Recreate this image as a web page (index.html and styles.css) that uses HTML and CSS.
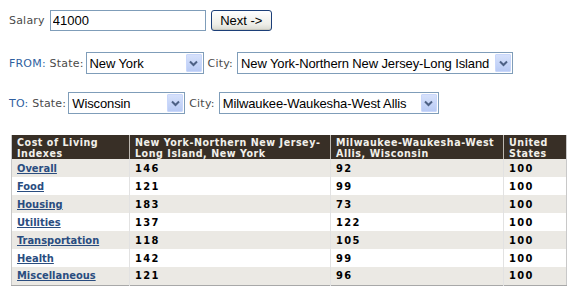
FILE: index.html
```html
<!DOCTYPE html>
<html>
<head>
<meta charset="utf-8">
<link rel="stylesheet" href="styles.css">
</head>
<body>
<div class="page">
  <div class="row row-salary">
    <span class="label">Salary</span>
    <input class="text-input" type="text" value="41000">
    <button class="btn">Next -&gt;</button>
  </div>
  <div class="row row-from">
    <span class="label"><span class="dir">FROM:</span> State:</span>
    <div class="select sel-state-from"><span class="sel-val">New York</span><span class="arrow"><svg width="9" height="7" viewBox="0 0 9 7"><path d="M1 1.5 L4.5 5 L8 1.5" fill="none" stroke="#4d6185" stroke-width="2"/></svg></span></div>
    <span class="label">City:</span>
    <div class="select sel-city-from"><span class="sel-val">New York-Northern New Jersey-Long Island</span><span class="arrow"><svg width="9" height="7" viewBox="0 0 9 7"><path d="M1 1.5 L4.5 5 L8 1.5" fill="none" stroke="#4d6185" stroke-width="2"/></svg></span></div>
  </div>
  <div class="row row-to">
    <span class="label"><span class="dir">TO:</span> State:</span>
    <div class="select sel-state-to"><span class="sel-val">Wisconsin</span><span class="arrow"><svg width="9" height="7" viewBox="0 0 9 7"><path d="M1 1.5 L4.5 5 L8 1.5" fill="none" stroke="#4d6185" stroke-width="2"/></svg></span></div>
    <span class="label">City:</span>
    <div class="select sel-city-to"><span class="sel-val">Milwaukee-Waukesha-West Allis</span><span class="arrow"><svg width="9" height="7" viewBox="0 0 9 7"><path d="M1 1.5 L4.5 5 L8 1.5" fill="none" stroke="#4d6185" stroke-width="2"/></svg></span></div>
  </div>
  <table class="col-table">
    <colgroup>
      <col class="c1"><col class="c2"><col class="c3"><col class="c4">
    </colgroup>
    <thead>
      <tr>
        <th>Cost of Living Indexes</th>
        <th>New York-Northern New Jersey-Long Island, New York</th>
        <th>Milwaukee-Waukesha-West Allis, Wisconsin</th>
        <th>United States</th>
      </tr>
    </thead>
    <tbody>
      <tr class="alt"><td><a href="#">Overall</a></td><td>146</td><td>92</td><td>100</td></tr>
      <tr><td><a href="#">Food</a></td><td>121</td><td>99</td><td>100</td></tr>
      <tr class="alt"><td><a href="#">Housing</a></td><td>183</td><td>73</td><td>100</td></tr>
      <tr><td><a href="#">Utilities</a></td><td>137</td><td>122</td><td>100</td></tr>
      <tr class="alt"><td><a href="#">Transportation</a></td><td>118</td><td>105</td><td>100</td></tr>
      <tr><td><a href="#">Health</a></td><td>142</td><td>99</td><td>100</td></tr>
      <tr class="alt"><td><a href="#">Miscellaneous</a></td><td>121</td><td>96</td><td>100</td></tr>
    </tbody>
  </table>
</div>
</body>
</html>
```
FILE: styles.css
```css
* { box-sizing: border-box; }
html, body { margin: 0; padding: 0; background: #fff; }
body {
  font-family: "DejaVu Sans", Verdana, sans-serif;
  font-size: 11px;
  color: #444;
}
.page {
  padding: 9px 0 0 9px;
  display: flex;
  flex-direction: column;
  align-items: flex-start;
}
.row {
  display: flex;
  align-items: center;
  height: 22px;
}
.row-salary { margin-bottom: 21px; }
.row-from { margin-bottom: 18px; }
.row-to { margin-bottom: 21px; }
.label { color: #4a4a4a; white-space: nowrap; letter-spacing: 0.2px; }
.dir { color: #2f5f9f; }
.text-input {
  margin-left: 5px;
  width: 156px;
  height: 21px;
  border: 1px solid #7f9db9;
  font-family: "Liberation Sans", Arial, sans-serif;
  font-size: 13px;
  color: #000;
  padding: 0 0 0 2px;
  outline: none;
}
.btn {
  margin-left: 5px;
  width: 61px;
  height: 21px;
  border: 1px solid #1c3f78;
  border-radius: 3px;
  background: linear-gradient(#ffffff, #eeeee8 70%, #d8d8cf);
  font-family: "Liberation Sans", Arial, sans-serif;
  font-size: 13px;
  color: #000;
  padding: 0;
  box-shadow: inset 0 -1px 0 #c9c8bd;
}
.select {
  display: flex;
  align-items: center;
  height: 22px;
  border: 1px solid #7f9db9;
  background: #fff;
  padding: 0 1px 0 3px;
  margin: 0 4px;
}
.sel-val {
  flex: 1;
  font-family: "Liberation Sans", Arial, sans-serif;
  font-size: 13px;
  letter-spacing: -0.12px;
  color: #000;
  white-space: nowrap;
  overflow: hidden;
}
.arrow {
  flex: none;
  width: 16px;
  height: 18px;
  display: flex;
  align-items: center;
  justify-content: center;
  background: linear-gradient(#d6e1fb, #b9cbf5);
  border: 1px solid #c9d7fb;
  border-radius: 1px;
  margin-left: 1px;
}
.sel-state-from { width: 118px; margin-left: 2px; }
.sel-city-from { width: 276px; }
.sel-state-to { width: 117px; margin-left: 2px; }
.sel-city-to { width: 220px; }

.col-table {
  margin: 0 0 0 2px;
  border-collapse: collapse;
  width: 555px;
  table-layout: fixed;
  border-left: 1px solid #c8c8c8;
  border-right: 1px solid #c8c8c8;
  border-bottom: 1px solid #a8a8a8;
  font-family: "DejaVu Sans Condensed", "DejaVu Sans", Verdana, sans-serif;
}
.c1 { width: 118px; }
.c2 { width: 201px; }
.c3 { width: 173px; }
.c4 { width: 63px; }
.col-table th {
  background: #382f26;
  color: #f2f0ea;
  font-weight: bold;
  font-size: 10.6px;
  line-height: 11px;
  text-align: left;
  vertical-align: top;
  padding: 2px 2px 0 5px;
  height: 24px;
  border-left: 1px solid #bdb8b0;
  letter-spacing: 0.55px;
}
.col-table th:first-child { border-left: none; }
.col-table td {
  height: 18px;
  padding: 0 5px;
  font-weight: bold;
  font-size: 11px;
  color: #000;
  border-left: 1px solid #e2e2e2;
  letter-spacing: 1.4px;
  vertical-align: middle;
}
.col-table td:first-child { border-left: none; letter-spacing: 0; }
.col-table tr.alt td { background: #ebe9e4; }
.col-table a {
  color: #2a4d7f;
  text-decoration: underline;
}
```
